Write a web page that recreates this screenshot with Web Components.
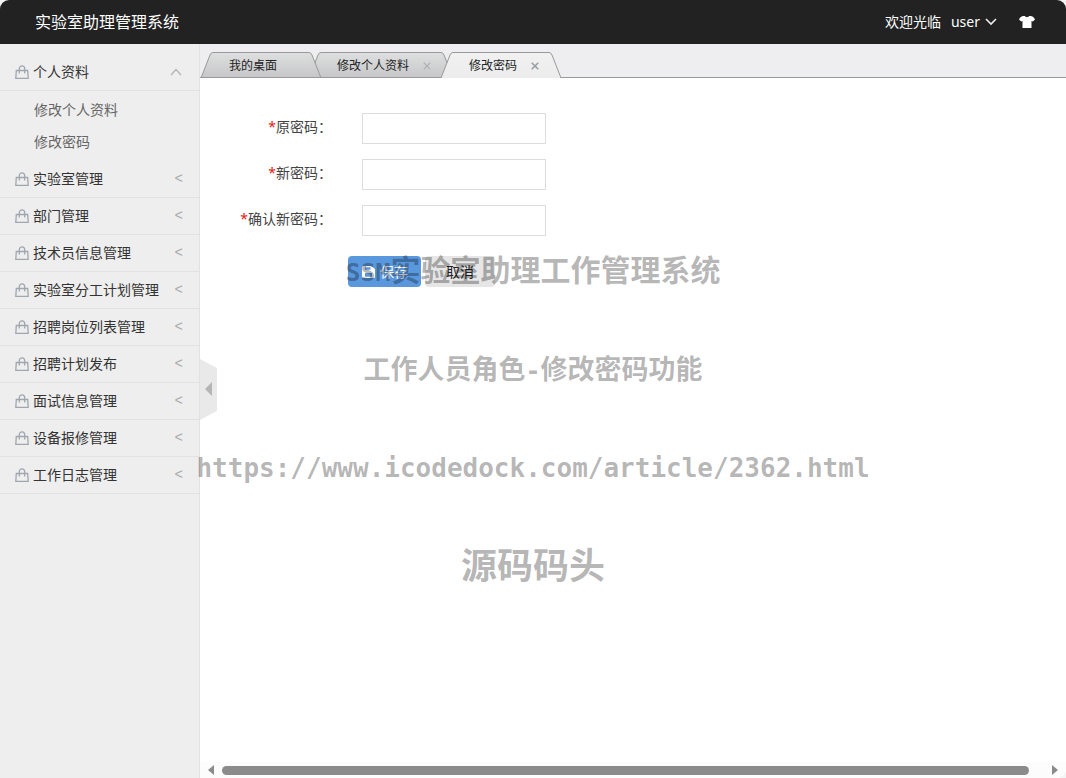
<!DOCTYPE html>
<html lang="zh-CN">
<head>
<meta charset="utf-8">
<title>实验室助理管理系统</title>
<style>
html, body { margin: 0; height: 100%; }
body { background: #f4f4f4; color: #333; font: 14px/20px "Noto Sans", "Noto Sans CJK SC", sans-serif; }
</style>
</head>
<body>
<app-shell>
  <app-header slot="header" name="实验室助理管理系统" user="user"></app-header>
  <side-menu slot="side">
    <menu-group label="个人资料" open>
      <menu-link label="修改个人资料"></menu-link>
      <menu-link label="修改密码"></menu-link>
    </menu-group>
    <menu-group label="实验室管理"></menu-group>
    <menu-group label="部门管理"></menu-group>
    <menu-group label="技术员信息管理"></menu-group>
    <menu-group label="实验室分工计划管理"></menu-group>
    <menu-group label="招聘岗位列表管理"></menu-group>
    <menu-group label="招聘计划发布"></menu-group>
    <menu-group label="面试信息管理"></menu-group>
    <menu-group label="设备报修管理"></menu-group>
    <menu-group label="工作日志管理"></menu-group>
  </side-menu>
  <tab-bar slot="tabs">
    <tab-item label="我的桌面" style="z-index:3"></tab-item>
    <tab-item label="修改个人资料" closable style="z-index:2"></tab-item>
    <tab-item label="修改密码" closable active style="z-index:4"></tab-item>
  </tab-bar>
  <password-form></password-form>
  <scroll-track slot="scroll"></scroll-track>
  <side-toggle slot="toggle"></side-toggle>
  <water-mark slot="mark"></water-mark>
</app-shell>

<script>
const define = (name, render, after) => customElements.define(name, class extends HTMLElement {
  connectedCallback() {
    if (this.shadowRoot) return;
    const root = this.attachShadow({ mode: 'open' });
    root.innerHTML = render(this);
    if (after) after(this, root);
  }
});

define('app-shell', () => `
<style>
:host { display: grid; grid-template: 44px minmax(0, 1fr) / 200px minmax(0, 1fr); position: relative; min-height: 100vh; border-radius: 9px 9px 9px 0; overflow: hidden; background: #fff; }
::slotted([slot=header]) { grid-column: 1 / -1; }
main { display: flex; flex-direction: column; position: relative; min-width: 0; }
.page { flex: 1; }
</style>
<slot name="header"></slot>
<slot name="side"></slot>
<main>
  <slot name="tabs"></slot>
  <div class="page"><slot></slot></div>
  <slot name="scroll"></slot>
  <slot name="toggle"></slot>
</main>
<slot name="mark"></slot>`);

define('app-header', el => `
<style>
:host { display: flex; align-items: center; justify-content: space-between; padding: 0 31px 0 35px; background: #222; color: #fff; }
h1 { margin: 0; font-size: 16px; font-weight: 400; }
nav { display: flex; align-items: center; }
button { display: flex; align-items: center; border: 0; padding: 0; background: none; color: inherit; font: inherit; }
.user { gap: 5px; margin: 0 22px 0 10px; }
svg { display: block; }
</style>
<h1>${el.getAttribute('name')}</h1>
<nav>
  <span>欢迎光临</span>
  <button class="user">${el.getAttribute('user')}
    <svg width="12" height="8" viewBox="0 0 12 8" fill="none" stroke="#eee" stroke-width="1.6"><path d="M1 1l5 5 5-5"/></svg>
  </button>
  <button aria-label="换肤">
    <svg width="16" height="12" viewBox="0 0 16 12" fill="#fff"><path d="M4.500 0H6c.5 1.600 3.500 1.600 4 0h1.500c2 .2 3.600 1.500 4.500 3.400l-2.200 2.200L12.500 5V12h-9V5L2.200 5.600 0 3.400C.9 1.500 2.500.2 4.500 0z"/></svg>
  </button>
</nav>`);

define('side-menu', () => `
<style>
:host { display: block; box-sizing: border-box; padding-top: 10px; background: #eee; border-right: 1px solid #e2e2e2; }
</style>
<nav><slot></slot></nav>`);

define('menu-group', el => {
  const open = el.hasAttribute('open');
  return `
<style>
:host { display: block; }
button { display: flex; align-items: center; box-sizing: border-box; width: 100%; height: 37px; padding: 0 16px 0 15px; border: 0; border-bottom: 1px solid #e2e2e2; background: none; color: #333; font: inherit; text-align: left; }
.name { flex: 1; margin-left: 4px; white-space: nowrap; }
.mark { color: #aaa; font: 14px/20px "Liberation Mono", monospace; }
.up { margin-right: 1px; }
.sub { padding: 3px 0; }
</style>
<button aria-expanded="${open}">
  <svg width="14" height="14" viewBox="0 0 14 14" fill="none" stroke="#a0a6b0" stroke-width="1.300"><path d="M1.300 5.500h11.400l.5 7.800H.8zM4.300 8.500V3.700a2.700 2.900 0 0 1 5.400 0V8.500"/></svg>
  <span class="name">${el.getAttribute('label')}</span>
  ${open ? '<svg class="up" width="12" height="8" viewBox="0 0 12 8" fill="none" stroke="#b4b4b4" stroke-width="1.300"><path d="M1 7l5-5.500L11 7"/></svg>' : '<span class="mark">&lt;</span>'}
</button>
${open ? '<div class="sub"><slot></slot></div>' : ''}`;
});

define('menu-link', el => `
<style>
:host { display: block; }
a { display: block; padding-left: 34px; line-height: 32px; color: #666; text-decoration: none; }
</style>
<a href="#">${el.getAttribute('label')}</a>`);

define('tab-bar', () => `
<style>
:host { display: flex; align-items: flex-end; height: 33px; padding-left: 1px; background: #eeeef0; border-bottom: 1px solid #999; isolation: isolate; }
</style>
<slot></slot>`);

define('tab-item', el => {
  const on = el.hasAttribute('active');
  const id = on ? 'on' : 'off';
  const top = on ? '#f1f1f2' : '#dedfdf', end = on ? '#ececed' : '#c6c6c8';
  const grad = `<defs><linearGradient id="${id}" x2="0" y2="26" gradientUnits="userSpaceOnUse"><stop stop-color="${top}"/><stop offset="1" stop-color="${end}"/></linearGradient></defs>`;
  const foot = on ? '' : '<path d="M0 25.500H12" stroke="#999"/>';
  const slope = `${grad}<path d="M0 26L9 3Q10 .5 12 .5V26z" fill="url(#${id})"/>${foot}<path d="M0 26L9 3Q10 .5 12 .5" fill="none" stroke="#999"/>`;
  return `
<style>
:host { display: flex; position: relative; height: 26px; margin: 0 -12px -1px 0; }
svg { display: block; flex: none; }
.body { display: flex; align-items: center; gap: 14px; box-sizing: border-box; min-width: 96px; padding: 0 10px 0 16px; border-top: 1px solid #999; background: linear-gradient(${top}, ${end}); ${on ? '' : 'box-shadow: inset 0 -1px #999;'} font-size: 12px; white-space: nowrap; }
a { color: #222; text-decoration: none; }
button { display: block; border: 0; padding: 0; background: none; }
.flip { transform: scaleX(-1); }
</style>
<svg width="12" height="26">${slope}</svg>
<div class="body"><a href="#">${el.getAttribute('label')}</a>${el.hasAttribute('closable') ? `<button aria-label="关闭"><svg width="8" height="8" viewBox="0 0 8 8" stroke="${on ? '#9b9fa3' : '#acb0b2'}" stroke-width="${on ? 1.6 : 1.2}"><path d="M.7.7l6.600 6.600M7.300.7L.7 7.300"/></svg></button>` : ''}</div>
<svg class="flip" width="12" height="26">${slope}</svg>`;
});

define('password-form', () => `
<style>
:host { display: block; }
form { padding: 35px 0 0; }
.row { display: grid; grid-template-columns: 132px 184px; column-gap: 30px; margin-bottom: 15px; }
label { padding-top: 4px; text-align: right; color: #444; white-space: nowrap; }
i { color: #e02020; font-style: normal; }
input { box-sizing: border-box; width: 100%; height: 31px; padding: 0 6px; border: 1px solid #ddd; background: #fff; font: inherit; outline: 0; }
.actions { display: flex; gap: 4px; margin: 20px 0 0 148px; }
button { display: flex; align-items: center; gap: 5px; height: 31px; border: 0; border-radius: 4px; font: inherit; }
.save { padding: 0 13px 0 14px; background: #5a98de; color: #fff; }
.cancel { padding: 0 21px; background: #e6e6e6; color: #222; }
</style>
<form>
  <div class="row"><label for="old"><i>*</i>原密码：</label><input id="old" type="password"></div>
  <div class="row"><label for="new"><i>*</i>新密码：</label><input id="new" type="password"></div>
  <div class="row"><label for="again"><i>*</i>确认新密码：</label><input id="again" type="password"></div>
  <div class="actions">
    <button type="submit" class="save"><svg width="13" height="12" viewBox="0 0 13 12"><path fill="#fff" fill-rule="evenodd" d="M1 0h8.500L13 3.200V11.200q0 .8-.8.8H.8Q0 12 0 11.200V1q0-1 1-1zM3 1.200v2.600h5.500V1.200zM3 7v3.800h7V7z"/></svg>保存</button>
    <button type="button" class="cancel">取消</button>
  </div>
</form>`, (el, root) => root.querySelector('form').addEventListener('submit', e => e.preventDefault()));

define('scroll-track', () => `
<style>
:host { display: flex; align-items: center; gap: 8px; height: 16px; padding: 0 8px; background: #fcfcfc; }
.thumb { flex: 1; height: 9px; margin-right: 15px; border-radius: 5px; background: #8b8b8b; }
</style>
<svg width="6" height="10" fill="#8b8b8b"><path d="M6 0v10L0 5z"/></svg>
<div class="thumb"></div>
<svg width="6" height="10" fill="#8b8b8b"><path d="M0 0v10l6-5z"/></svg>`);

define('side-toggle', () => `
<style>
:host { display: block; position: absolute; left: 0; top: 315px; }
button { display: block; border: 0; padding: 0; background: none; }
svg { display: block; }
</style>
<button aria-label="收起菜单"><svg width="17" height="61"><path fill="#e9e9e9" d="M0 0l17 9v43L0 61z"/><path fill="#b5b5b5" d="M12 23v14l-7-7z"/></svg></button>`);

define('water-mark', () => `
<style>
:host { display: flex; flex-direction: column; align-items: center; gap: 60px; position: absolute; inset: 248px 0 auto; z-index: 9; color: rgba(0, 0, 0, .3); font: 700 30px/40px "Noto Sans CJK SC", sans-serif; pointer-events: none; white-space: nowrap; }
p { height: 40px; margin: 0; }
.role { font-size: 27px; }
.mono { font-family: "DejaVu Sans Mono", monospace; font-size: 25px; line-height: 20px; }
.link { font: 700 26px/40px "DejaVu Sans Mono", monospace; }
.brand { margin-top: -5px; font-size: 36px; }
</style>
<p><span class="mono">SSM</span>实验室助理工作管理系统</p>
<p class="role">工作人员角色<span class="mono">-</span>修改密码功能</p>
<p class="link">https://www.icodedock.com/article/2362.html</p>
<p class="brand">源码码头</p>`);
</script>
</body>
</html>
